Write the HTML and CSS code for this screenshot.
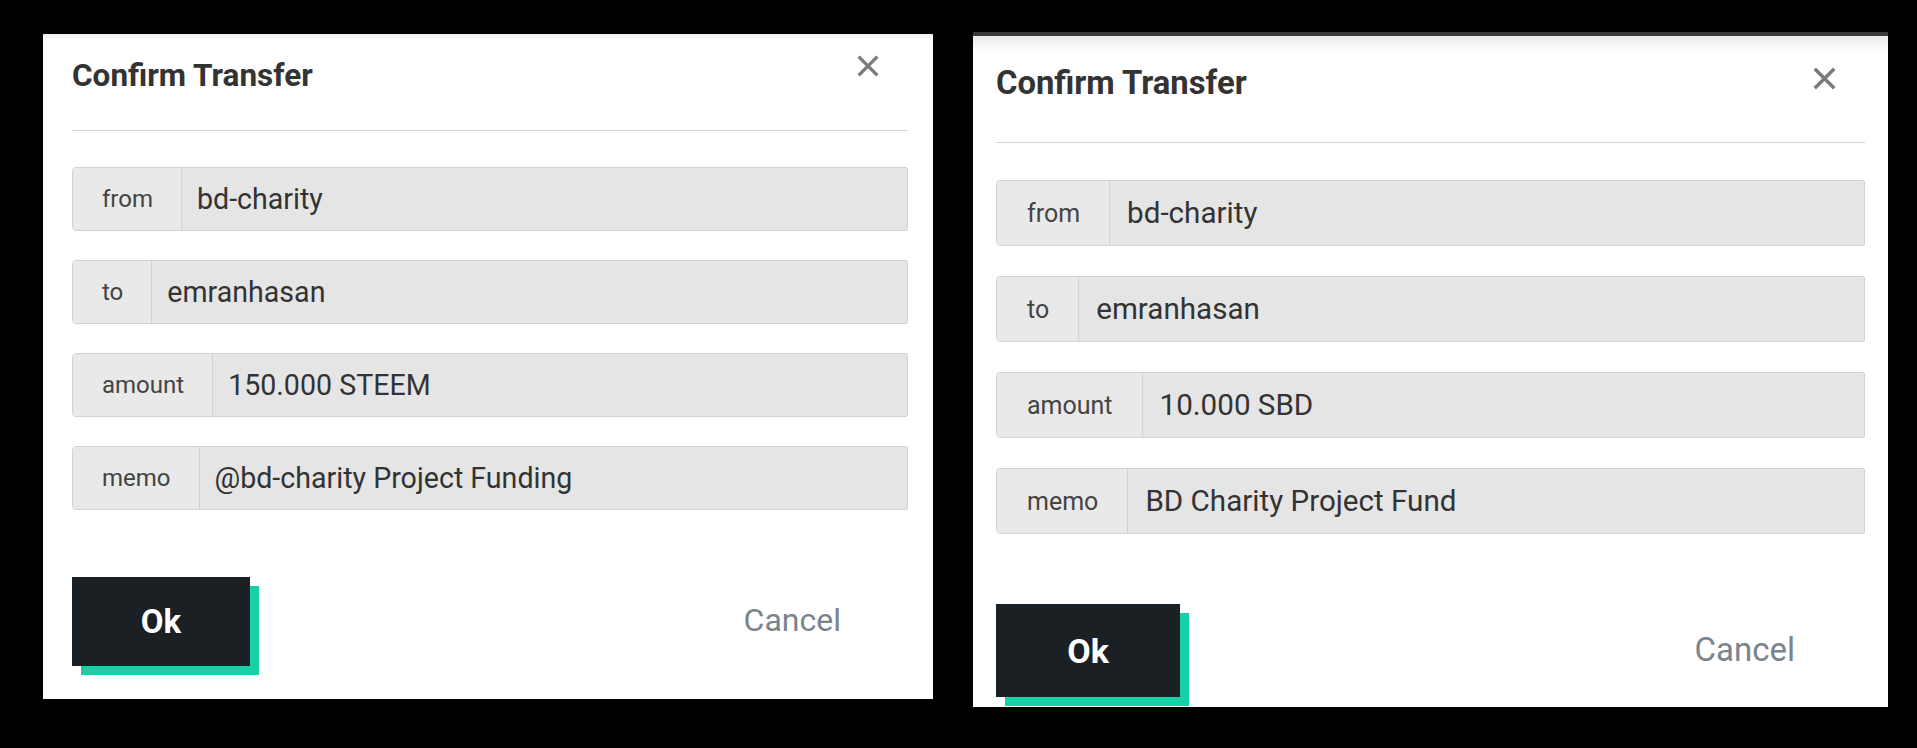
FILE: index.html
```html
<!DOCTYPE html>
<html lang="en">
<head>
<meta charset="utf-8">
<title>Confirm Transfer</title>
<link rel="stylesheet" href="styles.css">
</head>
<body>
<main class="stage">
  <section class="dialog dialog--a">
    <button class="dialog__close" aria-label="Close">
      <svg viewBox="0 0 20 20"><path d="M1.5 1.5 L18.5 18.5 M18.5 1.5 L1.5 18.5"/></svg>
    </button>
    <h2 class="dialog__title">Confirm Transfer</h2>
    <hr class="dialog__rule">
    <div class="fields">
      <div class="field"><span class="field__label">from</span><span class="field__value">bd-charity</span></div>
      <div class="field"><span class="field__label">to</span><span class="field__value">emranhasan</span></div>
      <div class="field"><span class="field__label">amount</span><span class="field__value">150.000 STEEM</span></div>
      <div class="field"><span class="field__label">memo</span><span class="field__value">@bd-charity Project Funding</span></div>
    </div>
    <div class="dialog__footer">
      <button class="btn-ok">Ok</button>
      <button class="btn-cancel">Cancel</button>
    </div>
  </section>

  <section class="dialog dialog--b">
    <button class="dialog__close" aria-label="Close">
      <svg viewBox="0 0 20 20"><path d="M1.5 1.5 L18.5 18.5 M18.5 1.5 L1.5 18.5"/></svg>
    </button>
    <h2 class="dialog__title">Confirm Transfer</h2>
    <hr class="dialog__rule">
    <div class="fields">
      <div class="field"><span class="field__label">from</span><span class="field__value">bd-charity</span></div>
      <div class="field"><span class="field__label">to</span><span class="field__value">emranhasan</span></div>
      <div class="field"><span class="field__label">amount</span><span class="field__value">10.000 SBD</span></div>
      <div class="field"><span class="field__label">memo</span><span class="field__value">BD Charity Project Fund</span></div>
    </div>
    <div class="dialog__footer">
      <button class="btn-ok">Ok</button>
      <button class="btn-cancel">Cancel</button>
    </div>
  </section>
</main>
</body>
</html>
```

FILE: styles.css
```css
html, body {
  margin: 0;
  padding: 0;
  background: #000;
  height: 100%;
}

.stage {
  display: flex;
  align-items: flex-start;
  gap: 40px;
  padding: 34px 0 0 43px;
  height: 748px;
  box-sizing: border-box;
  overflow: hidden;
}

.dialog {
  position: relative;
  box-sizing: border-box;
  display: flex;
  flex-direction: column;
  overflow: hidden;
  background: linear-gradient(#f1f1f1, #fff 8px);
  font-family: Roboto, "Liberation Sans", sans-serif;
  flex: none;
}

.dialog--a {
  width: 890px;
  height: 665px;
  padding: 25px 25px 0 29px;
}

.dialog--b {
  width: 915px;
  height: 675px;
  margin-top: -2px;
  padding: 30px 23px 0 23px;
  border-top: 4px solid #3a3a3a;
  background: linear-gradient(#e9e9e9, #fff 16px);
}

.dialog__close {
  position: absolute;
  padding: 0;
  border: 0;
  background: none;
  line-height: 0;
}

.dialog__close svg {
  width: 100%;
  height: 100%;
  fill: none;
  stroke: #7a7a7a;
  stroke-width: 3;
}

.dialog--a .dialog__close { top: 21px; right: 54px; width: 22px; height: 22px; }
.dialog--b .dialog__close { top: 31px; right: 52px; width: 23px; height: 23px; }

.dialog__title {
  margin: 0;
  font-weight: 700;
  color: #333;
}

.dialog--a .dialog__title { font-size: 31.5px; line-height: 34px; }
.dialog--b .dialog__title { font-size: 32.8px; line-height: 35px; }

.dialog__rule {
  border: 0;
  height: 1px;
  margin: 0;
  background: #d4d4d4;
}

.dialog--a .dialog__rule { margin-top: 37px; }
.dialog--b .dialog__rule { margin-top: 41px; }

.fields {
  display: flex;
  flex-direction: column;
}

.dialog--a .fields { margin-top: 36px; gap: 29px; }
.dialog--b .fields { margin-top: 37px; gap: 30px; }

.field {
  display: flex;
  box-sizing: border-box;
  border: 1px solid #d3d3d3;
  border-radius: 4px 2px 2px 4px;
  overflow: hidden;
}

.dialog--a .field { height: 64px; }
.dialog--b .field { height: 66px; }

.field__label {
  display: flex;
  align-items: center;
  background: #e9e9e9;
  border-right: 1px solid #d3d3d3;
  color: #444;
}

.dialog--a .field__label { font-size: 24px; padding: 0 28px 0 29px; }
.dialog--b .field__label { font-size: 25px; padding: 0 29px 0 30px; }

.field__value {
  flex: 1;
  display: flex;
  align-items: center;
  background: #e5e5e5;
  color: #333;
}

.dialog--a .field__value { font-size: 28.6px; padding-left: 15px; }
.dialog--b .field__value { font-size: 29.6px; padding-left: 17px; }

.dialog__footer {
  display: flex;
  align-items: center;
  justify-content: space-between;
}

.dialog--a .dialog__footer { margin-top: 67px; }
.dialog--b .dialog__footer { margin-top: 70px; }

.btn-ok {
  border: 0;
  border-radius: 0;
  padding: 0;
  background: #1b2024;
  color: #fff;
  font-family: inherit;
  font-weight: 700;
  box-shadow: 9px 9px 0 #16d1a6;
}

.dialog--a .btn-ok { width: 178px; height: 89px; font-size: 33px; }
.dialog--b .btn-ok { width: 184px; height: 93px; font-size: 34px; }

.btn-cancel {
  border: 0;
  padding: 0 0 3px;
  background: none;
  color: #7a848c;
  font-family: inherit;
}

.dialog--a .btn-cancel { font-size: 32px; margin-right: 67px; }
.dialog--b .btn-cancel { font-size: 33px; margin-right: 70px; }
```
